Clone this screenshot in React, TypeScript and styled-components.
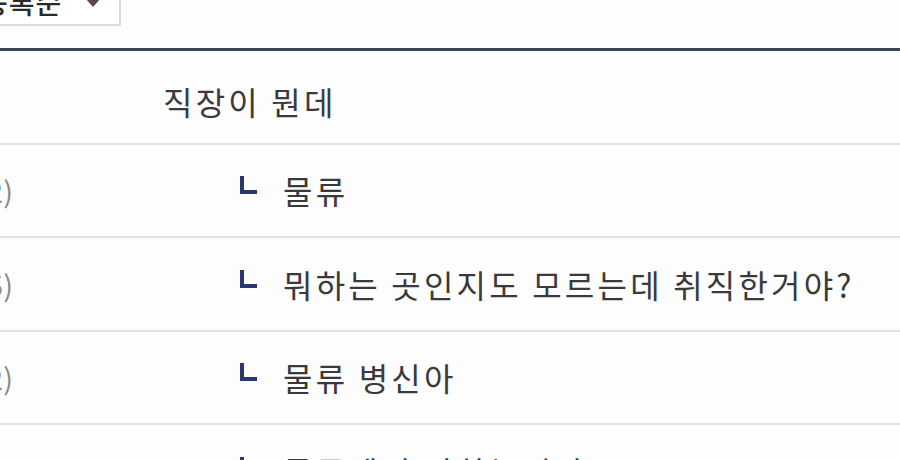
import React from "react";
import styled, { createGlobalStyle } from "styled-components";

type Comment = {
  writer: string;
  text: string;
  reply?: boolean;
};

const comments: Comment[] = [
  { writer: "", text: "직장이 뭔데" },
  { writer: "(223.62)", text: "물류", reply: true },
  { writer: "(118.235)", text: "뭐하는 곳인지도 모르는데 취직한거야?", reply: true },
  { writer: "(223.62)", text: "물류 병신아", reply: true },
  { writer: "(118.235)", text: "물류센터 말하는거냐", reply: true },
];

const GlobalStyle = createGlobalStyle`
  html, body {
    margin: 0;
    padding: 0;
    background: #fdfdfd;
    overflow: hidden;
  }
  body {
    font-family: "Noto Sans CJK KR", "Noto Sans", "Liberation Sans", sans-serif;
  }
`;

const Page = styled.div`
  width: 900px;
  height: 460px;
  overflow: hidden;
`;

const Toolbar = styled.div`
  height: 48px;
  display: flex;
  align-items: flex-start;
`;

const SortSelect = styled.div`
  box-sizing: border-box;
  margin-top: -22px;
  margin-left: -40px;
  width: 161px;
  height: 48px;
  padding: 0 18px 0 20px;
  display: flex;
  align-items: center;
  justify-content: space-between;
  background: #fff;
  border: 2px solid #dcdcdc;
  font-size: 28px;
  font-weight: 500;
  color: #2a2a2a;
  letter-spacing: 1px;
`;

const SelectArrow = styled.span`
  width: 0;
  height: 0;
  margin-top: 0;
  border-left: 8px solid transparent;
  border-right: 8px solid transparent;
  border-top: 9px solid #5a4848;
`;

const List = styled.div`
  border-top: 3px solid #3e4454;
  margin-left: -150px;
`;

const Row = styled.div`
  height: 91.5px;
  display: flex;
  align-items: center;
  border-bottom: 2px solid #e3e3e3;
  font-size: 32px;
  letter-spacing: 3.2px;
`;

const Writer = styled.div`
  flex: 0 0 163px;
  text-align: right;
  color: #8a8a8a;
  letter-spacing: 0;
  font-size: 29px;
`;

const Body = styled.div<{ $reply?: boolean }>`
  display: flex;
  align-items: center;
  gap: 26px;
  padding-left: ${(p) => (p.$reply ? "227px" : "150px")};
  padding-top: ${(p) => (p.$reply ? "0" : "8px")};
  color: #3a3a3a;
  white-space: nowrap;
`;

// the little "ㄴ" mark in front of replies
const ReplyMark = styled.span`
  box-sizing: border-box;
  width: 17px;
  height: 18px;
  margin-top: -10px;
  border-left: 4px solid #29376f;
  border-bottom: 4px solid #29376f;
`;

export default function App() {
  return (
    <Page>
      <GlobalStyle />
      <Toolbar>
        <SortSelect>
          등록순
          <SelectArrow />
        </SortSelect>
      </Toolbar>
      <List>
        {comments.map((c, i) => (
          <Row key={i}>
            <Writer>{c.writer}</Writer>
            <Body $reply={c.reply}>
              {c.reply && <ReplyMark />}
              <span>{c.text}</span>
            </Body>
          </Row>
        ))}
      </List>
    </Page>
  );
}
